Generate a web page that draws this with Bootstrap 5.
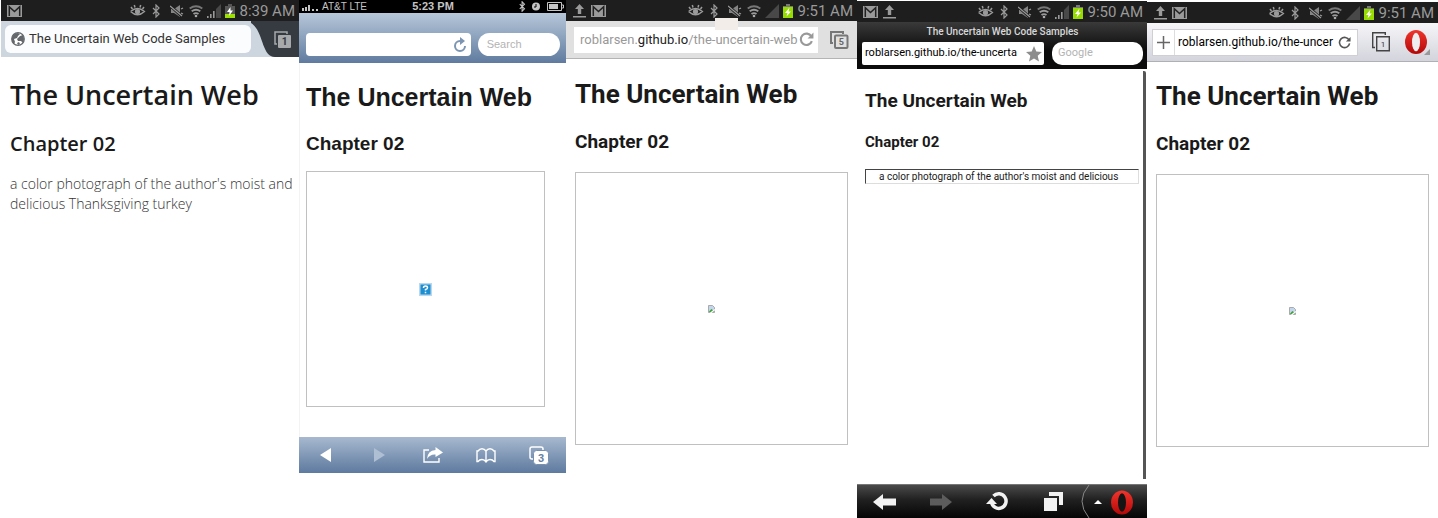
<!DOCTYPE html>
<html lang="en">
<head>
<meta charset="utf-8">
<meta name="viewport" content="width=device-width, initial-scale=1">
<title>The Uncertain Web Code Samples</title>
<link href="https://cdn.jsdelivr.net/npm/bootstrap@5.3.0/dist/css/bootstrap.min.css" rel="stylesheet">
<style>
body { background: #fff; color: #1a1a1a; font-family: Roboto, sans-serif; }
svg { display: block; flex: none; }
.devices { display: grid; grid-template-columns: 299fr 267fr 291fr 290fr 291fr; min-height: 100vh; }
.device { min-width: 0; }
.device button { background: none; border: 0; padding: 0; color: inherit; }
.device input { border: 0; background: none; padding: 0; min-width: 0; outline-offset: 2px; }
.device h1, .device h2 { margin: 0; font-weight: 700; color: #1a1a1a; }
.screen h1 { font-size: 26px; line-height: 32px; }
.screen h2 { font-size: 19px; line-height: 24px; margin-top: 20px; }
.screen { padding: 18px 9px 0; }

/* Android status bar */
.status { height: 21px; padding: 0 4px 0 6px; background: #1e1e1e; color: #9a9a9a; gap: 4px; font-size: 15px; line-height: 20px; }
.missing { border: 1px solid #c0c0c0; display: flex; align-items: center; justify-content: center; margin-top: 18px; }
.field { background: #fff; min-width: 0; display: flex; align-items: center; }

/* Firefox */
.firefox { padding-left: 1px; }
.firefox .chrome { height: 36px; background: #cdd6df; }
.firefox .field { flex: 1; height: 28px; margin-left: 4px; padding-left: 6px; gap: 4px; border-radius: 6px; background: #fbfcfd; font-size: 13px; }
.firefox .field input { color: #333; }
.firefox .tabs { width: 48px; height: 36px; color: #a7a9ab; position: relative; }
.firefox .tabs .curve { position: absolute; inset: 0; }
.firefox .tabs .count { position: absolute; right: 8px; top: 10px; }
.firefox .screen { font-family: "Open Sans", sans-serif; padding: 21px 4px 0 9px; }
.firefox .screen h1 { font-size: 27px; font-weight: 600; line-height: 34px; }
.firefox .screen h2 { font-size: 20px; font-weight: 600; line-height: 26px; margin-top: 19px; }
.firefox .screen p { font-size: 14px; line-height: 20px; font-weight: 300; margin: 17px 0 0; color: #333; }

/* Safari */
.safari { font-family: "Liberation Sans", Arial, sans-serif; }
.safari .ios-status { height: 13px; background: #000; color: #c4c4c4; font-size: 10px; line-height: 13px; padding: 0 2px 0 3px; }
.safari .clock { font-size: 11px; font-weight: 700; }
.safari .chrome { display: grid; grid-template-columns: 2fr 1fr; height: 50px; padding: 20px 6px 0 7px; gap: 7px; background: linear-gradient(#b7c7d9, #8ba1bc 50%, #5f7b9f); }
.safari .field { height: 23px; border-radius: 4px; padding: 0 4px; color: #7c95b3; }
.safari .search { border-radius: 12px; padding: 0 9px; font-size: 11px; }
.safari input::placeholder, .oprmini input::placeholder { color: #b3b3b3; opacity: 1; }
.safari .screen { padding: 18px 21px 30px 6px; border-left: 1px solid #f3f3f3; }
.safari .screen h1 { font-size: 25px; }
.safari .screen h2 { margin-top: 19px; }
.safari .missing { aspect-ratio: 239 / 236; margin-top: 15px; }
.safari .toolbar { height: 36px; color: #fff; background: linear-gradient(#a7b9cf, #8299b7 50%, #5e7a9f); }
.toolbar button { flex: 1; display: flex; justify-content: center; }

/* Chrome */
.gchrome .chrome { height: 38px; padding: 0 8px; gap: 12px; background: #e0e0e0; border-bottom: 1px solid #b4b4b4; color: #777; position: relative; }
.gchrome .field { flex: 1; height: 26px; padding: 0 4px 0 6px; font-size: 13px; color: #999; }
.gchrome .url { overflow: hidden; white-space: nowrap; }
.gchrome .url span { color: #222; }
.gchrome .patch { position: absolute; left: 50%; top: -3px; width: 23px; height: 12px; background: #f3edea; margin-left: 3px; }
.gchrome .missing, .opera .missing { aspect-ratio: 1; }
.gchrome .screen { padding-top: 19px; }

/* Opera Mini */
.oprmini { padding-top: 1px; display: flex; flex-direction: column; }
.oprmini .chrome { background: linear-gradient(#3a3a3a, #0c0c0c 60%); color: #d8d8d8; padding: 1px 4px 4px 5px; }
.oprmini .page-name { font-size: 10px; font-weight: 500; line-height: 18px; text-align: center; }
.oprmini .fields { display: grid; grid-template-columns: 2fr 1fr; gap: 8px; margin-top: 1px; }
.oprmini .field { height: 23px; border-radius: 2px; font-size: 11px; padding: 0 2px 0 3px; }
.oprmini .search { border-radius: 10px; padding: 0 6px; }
.oprmini .screen { flex: 1; margin: 2px 1px 5px 0; border-right: 3px solid #555; border-top-right-radius: 2px; padding: 18px 4px 0 8px; }
.oprmini .screen h1 { font-size: 19px; line-height: 24px; }
.oprmini .screen h2 { font-size: 15px; line-height: 20px; margin-top: 19px; }
.oprmini .alt-text { margin-top: 17px; border: 1px solid; border-color: #444 #ddd #ddd #444; font-size: 10px; line-height: 13px; padding-left: 13px; white-space: nowrap; overflow: hidden; }
.oprmini .toolbar { height: 34px; background: linear-gradient(#4a4a4a, #202020 45%, #050505); color: #fff; border-top: 1px solid #777; }
.oprmini .toolbar .menu { flex: 0 0 66px; justify-content: flex-start; }

/* Opera */
.opera { padding-top: 2px; }
.opera .chrome { height: 39px; padding: 0 7px 0 5px; gap: 14px; background: linear-gradient(#f6f6f9, #d3d4dc); border-bottom: 1px solid #aeb0b6; color: #444; }
.opera .field { flex: 1; height: 27px; border: 1px solid #cfcfd4; font-size: 12px; padding-right: 6px; }
.opera .field input { padding-left: 3px; }
.opera .add { width: 22px; align-self: stretch; border-right: 1px solid #ddd !important; display: flex; align-items: center; justify-content: center; }
</style>
</head>
<body>
<svg width="0" height="0" class="position-absolute" aria-hidden="true">
  <defs>
    <linearGradient id="red" x1="0" y1="0" x2="0" y2="1"><stop offset="0" stop-color="#f0352c"/><stop offset="1" stop-color="#b30808"/></linearGradient>
  </defs>
  <symbol id="mail" viewBox="0 0 15 12"><path fill="#9a9a9a" d="M0 0h15v12H0z"/><path fill="none" stroke="#222" stroke-width="1.5" d="M2.3 11V1.8L7.5 6.600l5.200-4.800V11"/></symbol>
  <symbol id="upload" viewBox="0 0 15 14"><path fill="#9a9a9a" d="M7.500 0 12 5H9.200v5H5.800V5H3zM1 12h13v1.500H1z"/></symbol>
  <symbol id="eye" viewBox="0 0 18 14"><path fill="none" stroke="#9a9a9a" stroke-width="1.500" d="M.6 7.500Q7.500 1.500 14.400 7.500 7.500 14 .6 7.500M2.500 5 1 3M5 3.500 4.300 1M10 3.500l.7-2.500M12.500 5 14 3"/><circle cx="7.500" cy="7.500" r="2.600" fill="#9a9a9a"/></symbol>
  <symbol id="bt" viewBox="0 0 14 14"><path fill="none" stroke="#9a9a9a" stroke-width="1.200" d="M1 4l6 6-3 3V1l3 3-6 6"/></symbol>
  <symbol id="mute" viewBox="0 0 15 14"><path fill="#858585" d="M1 5h3l6-4v12L4 9H1z"/><path stroke="#1e1e1e" stroke-width="3" d="M0 1.500l12 11"/><path stroke="#9a9a9a" stroke-width="1.300" d="M0 2l12 10M11 5l2-1M11 9l2 1"/></symbol>
  <symbol id="wifi" viewBox="0 0 14 14"><g fill="none" stroke="#999" stroke-width="1.900"><path stroke="#777" d="M.7 4.500q6.300-4.500 12.600 0"/><path d="M2.700 7.300q4.300-3.300 8.600 0"/><path d="M4.500 10q2.500-1.800 5 0"/></g><circle cx="7" cy="12" r="1.300" fill="#aaa"/></symbol>
  <symbol id="signal" viewBox="0 0 14 14"><path fill="#484848" d="M14 0v14H0z"/></symbol>
  <symbol id="bars" viewBox="0 0 14 14"><path fill="#484848" d="M14 0v14H9V5z"/><path fill="#999" d="M0 12h1.600v2H0zM3 10h1.600v4H3zM6 7h1.600v7H6z"/></symbol>
  <symbol id="low" viewBox="0 0 10 14"><path fill="#555" d="M3 0h4v2h3v12H0V2h3z"/><path fill="#9be000" d="M0 10h10v4H0z"/><path fill="#fff" d="M5.500 3 2 8h2.500L4 12l4-5.500H5.500z"/></symbol>
  <symbol id="full" viewBox="0 0 10 14"><path fill="#777" d="M3 0h4v2h3v2H0V2h3z"/><path fill="#96dc00" d="M0 3h10v11H0z"/><path fill="#fff" d="M6.500 3.500 2 9h2.500l-1 3.500L8 7.500H5.500z"/></symbol>
  <symbol id="reload" viewBox="0 0 14 14"><path fill="none" stroke="currentColor" stroke-width="2" d="M11.500 4A5.300 5.300 0 1 0 12 8.500"/><path fill="currentColor" d="M13.500.5V6H8z"/></symbol>
  <symbol id="opera-o" viewBox="0 0 22 24"><ellipse cx="11" cy="12" rx="11" ry="12" fill="url(#red)"/><ellipse cx="11" cy="12" rx="4" ry="9.300" fill="var(--hole, #eee)"/></symbol>
</svg>

<main class="devices">
  <section class="device firefox" aria-label="Firefox">
    <div class="status d-flex align-items-center">
      <svg width="15" height="12" class="me-auto"><use href="#mail"/></svg>
      <svg width="18" height="14"><use href="#eye"/></svg><svg width="14" height="14"><use href="#bt"/></svg><svg width="15" height="14"><use href="#mute"/></svg><svg width="14" height="14"><use href="#wifi"/></svg><svg width="14" height="14"><use href="#bars"/></svg><svg width="10" height="14"><use href="#low"/></svg>
      <span>8:39 AM</span>
    </div>
    <div class="chrome d-flex align-items-center">
      <div class="field">
        <svg width="14" height="14" viewBox="0 0 14 14"><circle cx="7" cy="7" r="6.300" fill="#fff" stroke="#63676b" stroke-width="1.200"/><path fill="#63676b" d="M1 5Q3 1 7 1l2 1-2 2-1 2-3 1 1 3-1 2Q0 9 1 5M9 4l3-1q2 4 0 8l-2-2-3 0-1-2 2-2zM6 11l2-1 1 2-2 1z"/></svg>
        <input class="flex-fill" type="text" aria-label="Page title" value="The Uncertain Web Code Samples">
      </div>
      <button class="tabs" aria-label="Tabs">
        <svg class="curve" width="48" height="36" viewBox="0 0 48 36"><path fill="#363b41" d="M-8 0H48v36H24C8 36 14 0-8 0z"/></svg>
        <svg class="count" width="17" height="17" viewBox="0 0 17 17"><path fill="none" stroke="#a7a9ab" stroke-width="1.500" d="M3 13H1V1h12v2"/><rect x="4" y="4" width="13" height="13" rx="1" fill="#a7a9ab"/><text x="10.500" y="14" font-size="10" font-weight="700" text-anchor="middle" fill="#363b41">1</text></svg>
      </button>
    </div>
    <div class="screen">
      <h1>The Uncertain Web</h1>
      <h2>Chapter 02</h2>
      <p>a color photograph of the author's moist and delicious Thanksgiving turkey</p>
    </div>
  </section>

  <section class="device safari" aria-label="Safari">
    <div class="ios-status d-flex align-items-center">
      <div class="d-flex align-items-center gap-1 flex-fill w-25">
        <svg width="16" height="8" viewBox="0 0 16 8"><path fill="#c4c4c4" d="M0 5h2v3H0zM3 4h2v4H3zM6 2h2v6H6zM10 6h2v2h-2zM14 6h2v2h-2z"/></svg><span>AT&amp;T LTE</span>
      </div>
      <span class="clock">5:23 PM</span>
      <div class="d-flex align-items-center justify-content-end gap-1 flex-fill w-25">
        <svg width="9" height="11" viewBox="0 0 9 14"><path fill="none" stroke="#c4c4c4" stroke-width="1.400" d="M1 4l6 6-3 3V1l3 3-6 6"/></svg>
        <svg width="12" height="9" viewBox="0 0 12 9"><circle cx="5" cy="4.500" r="4" fill="#c4c4c4"/><path fill="none" stroke="#000" d="M5 2v3H3"/></svg>
        <svg width="17" height="9" viewBox="0 0 17 9"><path fill="none" stroke="#c4c4c4" d="M.5.5h14v8H.5zM15 3h1.500v3H15"/><path fill="#c4c4c4" d="M2 2h9v5H2z"/></svg>
      </div>
    </div>
    <div class="chrome">
      <div class="field"><input class="flex-fill" type="text" aria-label="Address"><button aria-label="Reload"><svg width="14" height="16" viewBox="0 0 14 16"><path fill="none" stroke="currentColor" stroke-width="2" d="M7 4a5 5 0 1 0 5 5"/><path fill="currentColor" d="M7 0l5 4-5 4z"/></svg></button></div>
      <div class="field search"><input class="w-100" type="search" aria-label="Search" placeholder="Search"></div>
    </div>
    <div class="screen">
      <h1>The Uncertain Web</h1>
      <h2>Chapter 02</h2>
      <div class="missing">
        <svg width="13" height="13" viewBox="0 0 13 13"><path fill="#b9d8ee" d="M0 0h13v13H0z"/><path fill="#1d8fd0" d="M1.500 1.500h10v10h-10z"/><path fill="none" stroke="#fff" stroke-width="1.500" d="M4.500 5q0-2 2-2t2 1.700q0 1.300-2 1.800v1M6.500 8.700v1.500"/></svg>
      </div>
    </div>
    <div class="toolbar d-flex align-items-center">
      <button aria-label="Back"><svg width="12" height="14" viewBox="0 0 12 14"><path fill="#fff" d="M11 0v14L0 7z"/></svg></button>
      <button aria-label="Forward"><svg width="12" height="14" viewBox="0 0 12 14"><path fill="#aebfd3" d="M1 0v14l11-7z"/></svg></button>
      <button aria-label="Share"><svg width="20" height="16" viewBox="0 0 20 16"><path fill="none" stroke="#fff" stroke-width="1.400" d="M6 3H1v12h15v-4"/><path fill="#fff" d="M12.500 0 20 5.500 12.500 10V7.500Q7 7 4 12q.5-8.500 8.500-9z"/></svg></button>
      <button aria-label="Bookmarks"><svg width="20" height="15" viewBox="0 0 20 15"><path fill="none" stroke="#fff" stroke-width="1.400" d="M10 3Q8.500.7 6 .7T2 3H1v10.500h1Q3.500 11.500 6 11.500t4 2.500q1.500-2.500 4-2.500t4 2h1V3h-1Q16.500.7 14 .7T10 3v11"/></svg></button>
      <button aria-label="Pages"><svg width="20" height="19" viewBox="0 0 20 19"><rect x="1" y="1" width="13" height="12" rx="2" fill="none" stroke="#fff" stroke-width="1.500"/><rect x="4.500" y="4.500" width="15" height="14" rx="3" fill="#fff" stroke="#7890b0"/><text x="12" y="16" font-size="11" font-weight="700" text-anchor="middle" fill="#6680a2">3</text></svg></button>
    </div>
  </section>

  <section class="device gchrome" aria-label="Chrome">
    <div class="status d-flex align-items-center">
      <svg width="15" height="14"><use href="#upload"/></svg><svg width="15" height="12" class="me-auto"><use href="#mail"/></svg>
      <svg width="18" height="14"><use href="#eye"/></svg><svg width="14" height="14"><use href="#bt"/></svg><svg width="15" height="14"><use href="#mute"/></svg><svg width="14" height="14"><use href="#wifi"/></svg><svg width="14" height="14"><use href="#signal"/></svg><svg width="10" height="14"><use href="#full"/></svg>
      <span>9:51 AM</span>
    </div>
    <div class="chrome d-flex align-items-center">
      <div class="patch"></div>
      <div class="field"><div class="url flex-fill" role="textbox" contenteditable="true" aria-label="Address">roblarsen.<span>github.io</span>/the-uncertain-web</div><button aria-label="Reload"><svg width="15" height="15"><use href="#reload"/></svg></button></div>
      <button aria-label="Tabs"><svg width="19" height="18" viewBox="0 0 19 18"><path fill="none" stroke="#777" stroke-width="2" d="M3 12H1V1h12v2"/><rect x="5" y="4.500" width="12.500" height="12.500" rx="1" fill="#e0e0e0" stroke="#777" stroke-width="2"/><text x="11.300" y="14" font-size="9" font-weight="700" text-anchor="middle" fill="#666">5</text></svg></button>
    </div>
    <div class="screen">
      <h1>The Uncertain Web</h1>
      <h2>Chapter 02</h2>
      <div class="missing"><svg width="7" height="8" viewBox="0 0 7 8"><path fill="#c5d5ee" stroke="#999" stroke-width=".8" d="M.5.500h4l2 2v5h-6z"/><path fill="#3da435" d="M.8 7l2.500-3 1.500 1L6 7z"/><path stroke="#fff" stroke-width="1.200" d="M2.500 8 7 4.500"/></svg></div>
    </div>
  </section>

  <section class="device oprmini" aria-label="Opera Mini">
    <div class="status d-flex align-items-center">
      <svg width="15" height="12"><use href="#mail"/></svg><svg width="15" height="14" class="me-auto"><use href="#upload"/></svg>
      <svg width="18" height="14"><use href="#eye"/></svg><svg width="14" height="14"><use href="#bt"/></svg><svg width="15" height="14"><use href="#mute"/></svg><svg width="14" height="14"><use href="#wifi"/></svg><svg width="14" height="14"><use href="#bars"/></svg><svg width="10" height="14"><use href="#full"/></svg>
      <span>9:50 AM</span>
    </div>
    <div class="chrome">
      <div class="page-name">The Uncertain Web Code Samples</div>
      <div class="fields">
        <div class="field"><input class="flex-fill" type="text" aria-label="Address" value="roblarsen.github.io/the-uncerta"><button aria-label="Bookmark"><svg width="16" height="16" viewBox="0 0 16 16"><path fill="#8d8d8d" d="M8 0l2.300 5.400 5.700.5-4.300 3.900L13 15.500 8 12.500l-5 3 1.300-5.700L0 5.900l5.700-.5z"/></svg></button></div>
        <div class="field search"><input class="w-100" type="search" aria-label="Google search" placeholder="Google"></div>
      </div>
    </div>
    <div class="screen">
      <h1>The Uncertain Web</h1>
      <h2>Chapter 02</h2>
      <div class="alt-text">a color photograph of the author's moist and delicious</div>
    </div>
    <div class="toolbar d-flex align-items-center">
      <button aria-label="Back"><svg width="24" height="16" viewBox="0 0 24 16"><path fill="#f2f2f2" d="M0 8l10-8v4.500h13v7H10V16z"/></svg></button>
      <button aria-label="Forward"><svg width="24" height="16" viewBox="0 0 24 16"><path fill="#5c5c5c" d="M23 8 13 0v4.500H1v7h12V16z"/></svg></button>
      <button aria-label="Reload"><svg width="23" height="21" viewBox="0 0 23 21"><path fill="none" stroke="#f2f2f2" stroke-width="3.500" d="M7.500 5A7.300 7.300 0 1 1 5.500 11"/><path fill="#f2f2f2" d="M0 13 5.500 7l5.500 6z"/></svg></button>
      <button aria-label="Windows"><svg width="19" height="19" viewBox="0 0 19 19"><path fill="#f2f2f2" d="M0 6h13v13H0zM5 0h14v13h-4V4H5z"/></svg></button>
      <button class="menu" aria-label="Opera menu"><svg width="54" height="33" viewBox="0 0 54 33"><path fill="none" stroke="#888" d="M8 0Q-6 16 8 33"/><path fill="#fff" d="M13 19h8l-4-4z"/><svg x="30" y="5" width="22" height="25" style="--hole: #151515"><use href="#opera-o"/></svg></svg></button>
    </div>
  </section>

  <section class="device opera" aria-label="Opera">
    <div class="status d-flex align-items-center">
      <svg width="15" height="14"><use href="#upload"/></svg><svg width="15" height="12" class="me-auto"><use href="#mail"/></svg>
      <svg width="18" height="14"><use href="#eye"/></svg><svg width="14" height="14"><use href="#bt"/></svg><svg width="15" height="14"><use href="#mute"/></svg><svg width="14" height="14"><use href="#wifi"/></svg><svg width="14" height="14"><use href="#signal"/></svg><svg width="10" height="14"><use href="#full"/></svg>
      <span>9:51 AM</span>
    </div>
    <div class="chrome d-flex align-items-center">
      <div class="field">
        <button class="add" aria-label="Add"><svg width="13" height="13" viewBox="0 0 13 13"><path stroke="#666" stroke-width="1.500" d="M6.500 0v13M0 6.500h13"/></svg></button>
        <input class="flex-fill" type="text" aria-label="Address" value="roblarsen.github.io/the-uncer">
        <button aria-label="Reload"><svg width="13" height="13" viewBox="0 0 14 14"><path fill="none" stroke="#555" stroke-width="1.700" d="M12 4.500A5.500 5.500 0 1 0 12.500 8"/><path fill="#555" d="M13.500 1v5H8.500z"/></svg></button>
      </div>
      <button aria-label="Tabs"><svg width="18" height="20" viewBox="0 0 18 20"><path fill="none" stroke="#444" stroke-width="1.400" d="M4.700 4.700h12.600v14H4.700zM3 15.500H.7V.7h12.600V3"/><text x="11" y="15" font-size="8" text-anchor="middle" fill="#333">1</text></svg></button>
      <button aria-label="Opera menu"><svg width="27" height="25" viewBox="0 0 27 25"><use href="#opera-o" x="1" width="22" height="24"/><path fill="#999" d="M26 19v6h-6z"/></svg></button>
    </div>
    <div class="screen">
      <h1>The Uncertain Web</h1>
      <h2>Chapter 02</h2>
      <div class="missing"><svg width="7" height="8" viewBox="0 0 7 8"><path fill="#c5d5ee" stroke="#999" stroke-width=".8" d="M.5.500h4l2 2v5h-6z"/><path fill="#3da435" d="M.8 7l2.500-3 1.500 1L6 7z"/><path stroke="#fff" stroke-width="1.200" d="M2.500 8 7 4.500"/></svg></div>
    </div>
  </section>
</main>
<script src="https://cdn.jsdelivr.net/npm/bootstrap@5.3.0/dist/js/bootstrap.bundle.min.js"></script>
</body>
</html>
